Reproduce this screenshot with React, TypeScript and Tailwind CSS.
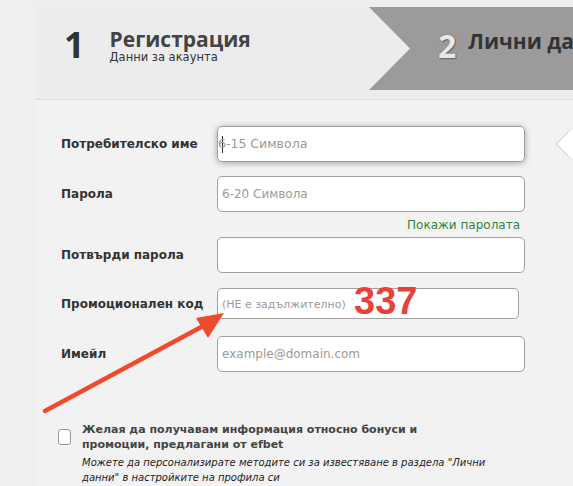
export default function App() {
  const label = "text-[12px] font-bold text-[#333]";
  const input =
    "h-full w-full rounded-[5px] border border-[#a0a0a0] bg-white px-[4px] text-[12px] text-[#333] placeholder:text-[#9a9a9a] outline-none";

  return (
    <div className="relative h-[486px] w-[573px] overflow-hidden bg-[#efefef] pl-[36px] pt-[7px] font-['DejaVu_Sans',Verdana,sans-serif]">
      {/* header with steps */}
      <div className="flex h-[93px] w-[640px] border-b border-[#dcdcdc] bg-[#ececec]">
        <div className="flex w-[333px] shrink-0 items-start pt-[22px]">
          <div className="ml-[28px] mt-[-2px] font-['Open_Sans',sans-serif] text-[36px] font-bold leading-none text-[#333]">1</div>
          <div className="ml-[25px] flex flex-col">
            <span className="font-['Open_Sans',sans-serif] text-[21px] font-bold leading-[21px] text-[#444]">Регистрация</span>
            <span className="text-[11.5px] leading-[14px] text-[#333]">Данни за акаунта</span>
          </div>
        </div>
        <div className="flex h-[83px] flex-1 items-start bg-[#9b9b9b] pl-[69px] pt-[22px] [clip-path:polygon(0_0,100%_0,100%_100%,0_100%,41px_50%)]">
          <span className="font-['Open_Sans',sans-serif] text-[32px] font-bold leading-[34px] text-[#e8e8e8] [text-shadow:0_0_1px_#555,1px_1px_1px_#666]">2</span>
          <span className="ml-[12px] whitespace-nowrap font-['Open_Sans',sans-serif] text-[21px] font-bold leading-[24px] text-[#333]">Лични данни</span>
        </div>
      </div>

      {/* form */}
      <div className="relative h-[400px] w-[640px] bg-[#f2f2f2] pl-[25px] pt-[26px]">
        <div className="flex h-[36px] items-center">
          <span className={`${label} w-[156px]`}>Потребителско име</span>
          <div className="h-[36px] w-[308px] rounded-[5px] shadow-[0_1px_6px_rgba(0,0,0,0.35)]">
            <div className="flex h-full w-full items-center rounded-[5px] border border-[#a0a0a0] bg-white pl-[4px] text-[12.5px] text-[#9a9a9a]">
              <span className="mr-[-5px] h-[17px] w-px bg-[#333]" />
              6-15 Символа
            </div>
          </div>
        </div>

        <div className="mt-[14px] flex h-[36px] items-center">
          <span className={`${label} w-[156px]`}>Парола</span>
          <div className="h-[36px] w-[308px]">
            <input className={`${input} text-[12.5px]`} placeholder="6-20 Символа" type="password" />
          </div>
        </div>
        <div className="flex h-[25px] w-[464px] items-center justify-end pr-[5px] text-[12px] text-[#2e8540]">
          Покажи паролата
        </div>

        <div className="flex h-[36px] items-center">
          <span className={`${label} w-[156px]`}>Потвърди парола</span>
          <div className="h-[36px] w-[308px]">
            <input className={input} type="password" />
          </div>
        </div>

        <div className="mt-[15px] flex h-[31px] items-center">
          <span className={`${label} w-[156px]`}>Промоционален код</span>
          <div className="h-[31px] w-[302px]">
            <input className={`${input} placeholder:text-[11px]`} placeholder="(НЕ е задължително)" />
          </div>
        </div>

        <div className="mt-[17px] flex h-[36px] items-center">
          <span className={`${label} w-[156px]`}>Имейл</span>
          <div className="h-[36px] w-[308px]">
            <input className={input} placeholder="example@domain.com" />
          </div>
        </div>

        <div className="mt-[50px] flex items-start">
          <span className="mt-[7px] ml-[-3px] h-[16px] w-[13px] shrink-0 rounded-[3px] border border-[#999] bg-white" />
          <div className="ml-[11px] w-[360px]">
            <p className="text-[11px] font-bold leading-[15px] text-[#444]">
              Желая да получавам информация относно бонуси и промоции, предлагани от efbet
            </p>
            <p className="mt-[3px] w-[410px] text-[10px] italic leading-[15px] text-[#222]">
              Можете да персонализирате методите си за известяване в раздела "Лични данни" в настройките на профила си
            </p>
          </div>
        </div>
      </div>

      {/* tooltip pointer */}
      <div className="absolute left-[560px] top-[133px] h-[22px] w-[22px] rotate-45 border-b border-l border-[#d8d8d8] bg-white" />

      {/* annotation */}
      <svg className="absolute left-0 top-0" width="573" height="486" viewBox="0 0 573 486">
        <line x1="45" y1="411" x2="205" y2="325" stroke="#ef4a2d" strokeWidth="4.5" strokeLinecap="round" />
        <polygon points="224,313 196,318 208,338" fill="#ef4a2d" />
      </svg>
      <span className="absolute left-[354px] top-[281px] font-['Liberation_Sans',Arial,sans-serif] text-[38px] font-bold leading-[40px] text-[#e8413a]">
        337
      </span>
    </div>
  );
}
